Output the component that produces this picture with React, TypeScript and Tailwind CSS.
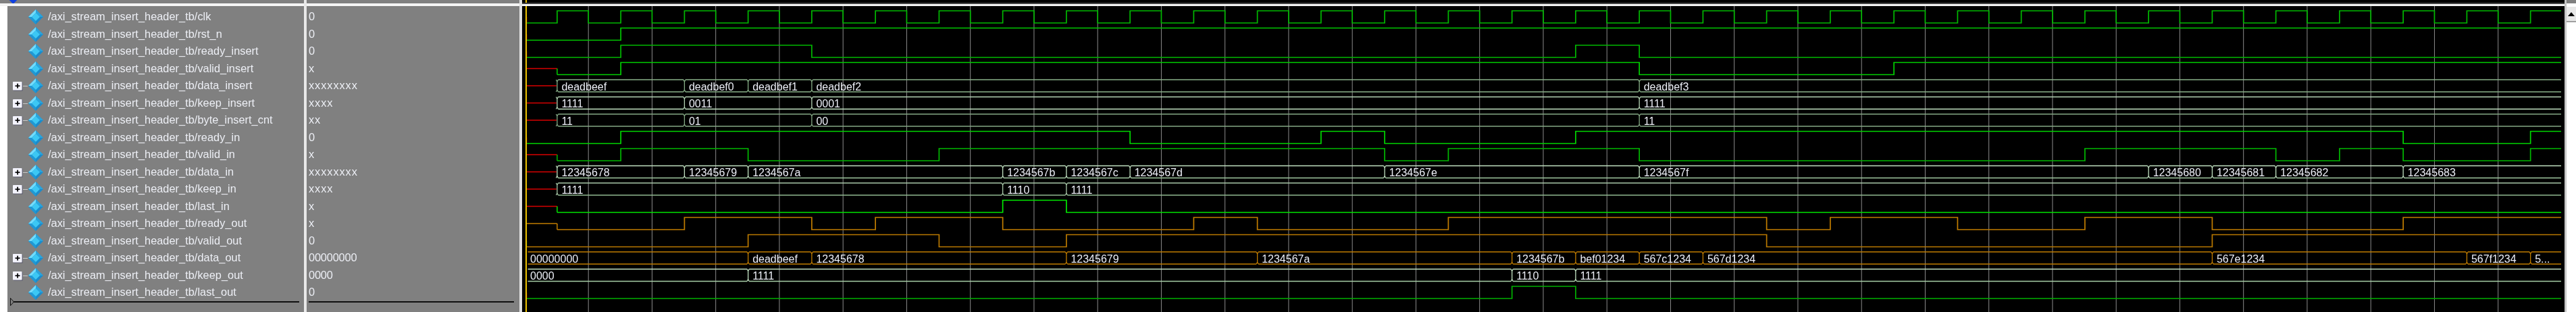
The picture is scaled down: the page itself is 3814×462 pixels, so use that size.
import React from "react";

const R = (k: number) => 824.9 + 94.25 * k;
const F = (k: number) => 871.2 + 94.25 * k;
const END = 3792;
const high = (i: number) => 16 + 25.5 * i;
const low = (i: number) => high(i) + 18;

type Sig = {
  name: string;
  value: string;
  bus?: boolean;
  wide?: boolean;
};

const P = "/axi_stream_insert_header_tb/";
const signals: Sig[] = [
  { name: "clk", value: "0" },
  { name: "rst_n", value: "0" },
  { name: "ready_insert", value: "0" },
  { name: "valid_insert", value: "x", wide: true },
  { name: "data_insert", value: "xxxxxxxx", bus: true, wide: true },
  { name: "keep_insert", value: "xxxx", bus: true, wide: true },
  { name: "byte_insert_cnt", value: "xx", bus: true, wide: true },
  { name: "ready_in", value: "0" },
  { name: "valid_in", value: "x", wide: true },
  { name: "data_in", value: "xxxxxxxx", bus: true, wide: true },
  { name: "keep_in", value: "xxxx", bus: true, wide: true },
  { name: "last_in", value: "x", wide: true },
  { name: "ready_out", value: "x", wide: true },
  { name: "valid_out", value: "0" },
  { name: "data_out", value: "00000000", bus: true },
  { name: "keep_out", value: "0000", bus: true },
  { name: "last_out", value: "0" },
];

const ORANGE = "#c07c00";
const RED = "#d80000";

// Single-bit waves: the edge list toggles the level, starting low.
const digital: { row: number; color: string; x: boolean; edges: number[] }[] = [
  { row: 1, color: "#00c800", x: false, edges: [1] },
  { row: 2, color: "#00b800", x: false, edges: [1, 4, 16, 17] },
  { row: 3, color: "#00d000", x: true, edges: [1, 17, 21] },
  { row: 7, color: "#00d800", x: false, edges: [1, 9, 12, 13, 16, 29, 31] },
  { row: 8, color: "#00b800", x: true, edges: [1, 3, 6, 13, 14, 17, 24, 27, 28, 29, 31] },
  { row: 11, color: "#00e800", x: true, edges: [7, 8] },
  { row: 12, color: ORANGE, x: true, edges: [2, 4, 5, 7, 10, 11, 14, 19, 20, 22, 24, 26, 29] },
  { row: 13, color: "#b87800", x: false, edges: [3, 6, 8, 19, 26] },
  { row: 16, color: "#00b000", x: false, edges: [15, 16] },
];

// Buses: segments start at an edge index; -1 means the start of the trace.
const buses: { row: number; top: string; bot: string; x: boolean; segs: [number, string][] }[] = [
  { row: 4, top: "#88b088", bot: "#88b088", x: true, segs: [[0, "deadbeef"], [2, "deadbef0"], [3, "deadbef1"], [4, "deadbef2"], [17, "deadbef3"]] },
  { row: 5, top: "#b4d4b4", bot: "#c4e4c4", x: true, segs: [[0, "1111"], [2, "0011"], [4, "0001"], [17, "1111"]] },
  { row: 6, top: "#84a884", bot: "#84a884", x: true, segs: [[0, "11"], [2, "01"], [4, "00"], [17, "11"]] },
  { row: 9, top: "#c0e0c0", bot: "#a0c8a0", x: true, segs: [[0, "12345678"], [2, "12345679"], [3, "1234567a"], [7, "1234567b"], [8, "1234567c"], [9, "1234567d"], [13, "1234567e"], [17, "1234567f"], [25, "12345680"], [26, "12345681"], [27, "12345682"], [29, "12345683"]] },
  { row: 10, top: "#a8c8a8", bot: "#90b890", x: true, segs: [[0, "1111"], [7, "1110"], [8, "1111"]] },
  { row: 14, top: ORANGE, bot: ORANGE, x: false, segs: [[-1, "00000000"], [3, "deadbeef"], [4, "12345678"], [8, "12345679"], [11, "1234567a"], [15, "1234567b"], [16, "bef01234"], [17, "567c1234"], [18, "567d1234"], [26, "567e1234"], [30, "567f1234"], [31, "5..."]] },
  { row: 15, top: "#c4e4c4", bot: "#a8d0a8", x: false, segs: [[-1, "0000"], [3, "1111"], [15, "1110"], [16, "1111"]] },
];

function digitalPath(row: number, x: boolean, edges: number[]) {
  let lvl = false;
  const parts: string[] = [];
  if (x) parts.push(`M ${R(0)} ${low(row)}`);
  else parts.push(`M 780 ${low(row)}`);
  for (const k of edges) {
    const px = R(k);
    parts.push(`H ${px} V ${lvl ? low(row) : high(row)}`);
    lvl = !lvl;
  }
  parts.push(`H ${END}`);
  return parts.join(" ");
}

function clockPath() {
  const parts = [`M 780 ${low(0)}`];
  for (let k = 0; k <= 31; k++) {
    parts.push(`H ${R(k)} V ${high(0)}`);
    if (k <= 30) parts.push(`H ${F(k)} V ${low(0)}`);
  }
  parts.push(`H ${END}`);
  return parts.join(" ");
}

function Diamond({ expand }: { expand: boolean }) {
  return (
    <svg width="45" height="24" viewBox="0 0 45 24" className="shrink-0">
      {expand && (
        <>
          <rect x="14" y="12" width="8" height="1" fill="#c8c8c8" />
          <rect x="1" y="7" width="14" height="13" rx="1" fill="#6c6c78" />
          <rect x="0" y="6" width="13.5" height="12.5" rx="1" fill="#f4f4ff" />
          <rect x="3.5" y="11.4" width="7" height="1.7" fill="#000" />
          <rect x="6.2" y="8.7" width="1.7" height="7" fill="#000" />
        </>
      )}
      <polygon points="34,1 45,12 34,23 23,12" fill="#1a8ccc" />
      <polygon points="34,1 45,12 40,12 34,6" fill="#2aa4dc" />
      <polygon points="34,1 23,12 28,12 34,6" fill="#72dcfc" />
      <polygon points="34,23 23,12 28,12 34,18" fill="#2098d4" />
      <polygon points="34,6 40,12 34,18 28,12" fill="#3cc8f4" />
    </svg>
  );
}

function Waves() {
  const grid: number[] = [];
  for (let k = 0; k <= 30; k++) grid.push(F(k));
  return (
    <svg
      width="3024"
      height="453"
      viewBox="773 9 3024 453"
      className="block font-['Liberation_Sans',sans-serif]"
    >
      {grid.map((x) => (
        <line key={x} x1={x} x2={x} y1="9" y2="462" stroke="#8c8c8c" strokeWidth="1" />
      ))}
      <path d={clockPath()} fill="none" stroke="#00b800" strokeWidth="1.7" />
      {digital.map((d) => (
        <g key={d.row}>
          {d.x && (
            <path
              d={`M 780 ${high(d.row) + 9} H ${R(0) - 1} L ${R(0)} ${high(d.row) + 10}`}
              fill="none"
              stroke={d.row === 12 ? ORANGE : RED}
              strokeWidth="1.7"
            />
          )}
          {d.x && (
            <line x1={R(0)} x2={R(0)} y1={high(d.row) + 9} y2={low(d.row)} stroke={d.color} strokeWidth="1.5" />
          )}
          {!d.x && (
            <line x1="779.5" x2="779.5" y1={high(d.row) + 9} y2={low(d.row)} stroke={d.row === 13 ? "#00a000" : RED} strokeWidth="1.5" />
          )}
          <path d={digitalPath(d.row, d.x, d.edges)} fill="none" stroke={d.color} strokeWidth="1.7" />
        </g>
      ))}
      <line x1="779.5" x2="779.5" y1={high(0) + 9} y2={low(0)} stroke={RED} strokeWidth="1.5" />
      {buses.map((b) => {
        const t = high(b.row);
        const bot = low(b.row);
        const m = t + 9;
        return (
          <g key={b.row}>
            {b.x && <line x1="780" x2={R(0) - 1} y1={m} y2={m} stroke={RED} strokeWidth="1.7" />}
            {b.segs.map(([k, label], idx) => {
              const x0 = k < 0 ? 780 : R(k);
              const next = b.segs[idx + 1];
              const x1 = next ? R(next[0]) : END;
              const tail = next ? 1.5 : 0;
              return (
                <g key={idx}>
                  <line x1={x0 + 1.5} x2={x1 - tail} y1={t} y2={t} stroke={b.top} strokeWidth="1.7" />
                  <line x1={x0 + 1.5} x2={x1 - tail} y1={bot} y2={bot} stroke={b.bot} strokeWidth="1.7" />
                  {k >= 0 && (
                    <path
                      d={`M ${x0 - 1.5} ${t} L ${x0} ${t + 3} V ${bot - 3} L ${x0 - 1.5} ${bot} M ${x0 + 1.5} ${t} L ${x0} ${t + 3} M ${x0 + 1.5} ${bot} L ${x0} ${bot - 3}`}
                      fill="none"
                      stroke={b.top}
                      strokeWidth="1.3"
                    />
                  )}
                  <text x={k < 0 ? 785 : x0 + 6.5} y={m + 6.7} fontSize="16" fill="#eceef6">
                    {label}
                  </text>
                </g>
              );
            })}
          </g>
        );
      })}
      <rect x="778" y="9" width="2" height="453" fill="#f0c400" />
    </svg>
  );
}

export default function App() {
  return (
    <div className="flex h-[462px] w-[3814px] overflow-hidden bg-white font-['Liberation_Sans',sans-serif] text-[16.4px] text-[#eceef4] blur-[0.4px]">
      {/* signal names */}
      <div className="flex w-[450px] shrink-0 flex-col">
        <div className="relative h-[5px] overflow-hidden bg-[#808080]">
          <div className="absolute left-[15px] top-[-5px] h-[9px] w-[9px] rotate-45 bg-[#1040e0]" />
        </div>
        <div className="h-[4px] bg-[#f4f4f4]" />
        <div className="flex flex-1">
          <div className="w-[11px] bg-white" />
          <div className="flex flex-1 flex-col bg-[#808080] pt-[3.25px]">
            {signals.map((s) => (
              <div key={s.name} className="flex h-[25.5px] items-center pl-[8px] leading-none">
                <Diamond expand={!!s.bus} />
                <span className="ml-[7px] mb-[1px] whitespace-nowrap">{P + s.name}</span>
              </div>
            ))}
            <div className="relative ml-[4px] mr-[7px] h-[2px] bg-[#101010]">
              <svg width="6" height="12" viewBox="0 0 6 12" className="absolute left-0 top-[-5px]">
                <polygon points="0.5,0.5 5.5,6 0.5,11.5" fill="#808080" stroke="#101010" />
              </svg>
            </div>
          </div>
        </div>
      </div>
      <div className="w-[4px] shrink-0 bg-[#e8e8e8]" />
      {/* values */}
      <div className="flex w-[315px] shrink-0 flex-col">
        <div className="h-[5px] bg-[#808080]" />
        <div className="h-[4px] bg-[#f4f4f4]" />
        <div className="flex flex-1 flex-col bg-[#808080] pt-[3.25px]">
          {signals.map((s) => (
            <div
              key={s.name}
              className={`flex h-[25.5px] items-center pb-[1px] pl-[3px] leading-none ${s.wide ? "tracking-[0.9px]" : "tracking-[-0.2px]"}`}
            >
              {s.value}
            </div>
          ))}
          <div className="ml-[3px] mr-[8px] h-[2px] bg-[#101010]" />
        </div>
      </div>
      <div className="w-[4px] shrink-0 bg-[#e0e0e0]" />
      {/* waveform */}
      <div className="flex w-[3024px] shrink-0 flex-col bg-black">
        <div className="flex h-[4px] bg-black pl-[5px]">
          <div className="h-full w-[2px] bg-[#f0c400]" />
        </div>
        <div className="h-[2px] bg-[#404040]" />
        <div className="h-[3px] bg-[#f4f4f4]" />
        <Waves />
      </div>
      {/* scroll bar */}
      <div className="flex w-[17px] shrink-0 flex-col border-l-[3px] border-[#c8c8c8] bg-[#f0f0f0]">
        <div className="h-[5px] bg-[#808080]" />
        <div className="h-[5px] bg-white" />
        <div className="flex h-[23px] items-center justify-center border-b-2 border-[#a0a0a0] bg-[#e8e8e8]">
          <div className="h-0 w-0 border-x-[5px] border-b-[6px] border-x-transparent border-b-black" />
        </div>
        <div className="flex-1 bg-white" />
      </div>
    </div>
  );
}
